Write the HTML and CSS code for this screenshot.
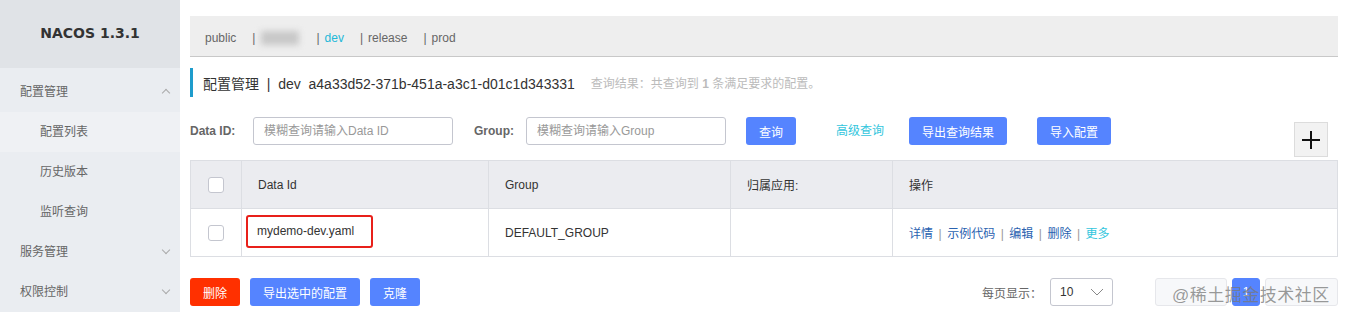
FILE: index.html
```html
<!DOCTYPE html>
<html lang="zh-CN">
<head>
    <meta charset="UTF-8">
    <title>Nacos - 配置列表</title>
    <link rel="stylesheet" href="styles.css">
</head>
<body>
    <div class="layout">
        <aside class="sidebar">
            <div class="brand">NACOS 1.3.1</div>
            <ul class="menu">
                <li class="menu-group">配置管理 <span class="arrow up"></span></li>
                <li class="menu-item active">配置列表</li>
                <li class="menu-item">历史版本</li>
                <li class="menu-item">监听查询</li>
                <li class="menu-group">服务管理 <span class="arrow"></span></li>
                <li class="menu-group">权限控制 <span class="arrow"></span></li>
            </ul>
        </aside>

        <main class="content">
            <div class="ns-bar">
                <span class="ns">public</span>
                <span class="ns"><span class="sep">|</span><span class="blurred"></span></span>
                <span class="ns current"><span class="sep">|</span>dev</span>
                <span class="ns"><span class="sep">|</span>release</span>
                <span class="ns"><span class="sep">|</span>prod</span>
            </div>

            <div class="page-title">
                <span class="title-main">配置管理 &nbsp;|&nbsp; dev &nbsp;a4a33d52-371b-451a-a3c1-d01c1d343331</span>
                <span class="title-info">查询结果：共查询到 <b>1</b> 条满足要求的配置。</span>
            </div>

            <div class="search-row">
                <label class="field-label">Data ID:</label>
                <input class="field-input" placeholder="模糊查询请输入Data ID">
                <label class="field-label group-label">Group:</label>
                <input class="field-input" placeholder="模糊查询请输入Group">
                <button class="btn btn-query">查询</button>
                <a class="link-adv">高级查询</a>
                <button class="btn btn-export">导出查询结果</button>
                <button class="btn btn-import">导入配置</button>
                <button class="btn-add">
                    <svg width="20" height="20" viewBox="0 0 20 20"><path d="M10 1v18M1 10h18" stroke="#111" stroke-width="2"/></svg>
                </button>
            </div>

            <table class="cfg-table">
                <thead>
                    <tr>
                        <th class="col-check"><span class="checkbox"></span></th>
                        <th class="col-id">Data Id</th>
                        <th class="col-group">Group</th>
                        <th class="col-app">归属应用:</th>
                        <th>操作</th>
                    </tr>
                </thead>
                <tbody>
                    <tr>
                        <td class="col-check"><span class="checkbox"></span></td>
                        <td class="col-id"><span class="highlight">mydemo-dev.yaml</span></td>
                        <td>DEFAULT_GROUP</td>
                        <td></td>
                        <td class="ops">
                            <a>详情</a><span class="op-sep">|</span><a>示例代码</a><span class="op-sep">|</span><a>编辑</a><span class="op-sep">|</span><a>删除</a><span class="op-sep">|</span><a class="more">更多</a>
                        </td>
                    </tr>
                </tbody>
            </table>

            <div class="footer-row">
                <button class="btn btn-delete">删除</button>
                <button class="btn btn-export-sel">导出选中的配置</button>
                <button class="btn btn-clone">克隆</button>
                <div class="pager">
                    <span class="page-size-label">每页显示：</span>
                    <div class="page-size">10
                        <svg width="14" height="8" viewBox="0 0 14 8"><path d="M1 1l6 6 6-6" fill="none" stroke="#888" stroke-width="1"/></svg>
                    </div>
                    <div class="pages">
                        <span class="page-btn prev"></span>
                        <span class="page-btn num">1</span>
                        <span class="page-btn next"></span>
                        <span class="watermark">@稀土掘金技术社区</span>
                    </div>
                </div>
            </div>
        </main>
    </div>
</body>
</html>
```

FILE: styles.css
```css
body {
    margin: 0;
    padding: 0;
    font-family: "Liberation Sans", "Noto Sans CJK SC", sans-serif;
    font-size: 12px;
    color: #333;
    overflow: hidden;
    height: 312px;
}

.layout {
    display: flex;
    height: 312px;
}

/* menu de gauche */
.sidebar {
    width: 180px;
    flex-shrink: 0;
    background-color: #eaedf1;
}

.brand {
    height: 68px;
    line-height: 67px;
    text-align: center;
    background-color: #e0e3e7;
    font-family: "DejaVu Sans", sans-serif;
    font-weight: bold;
    font-size: 14px;
    color: #333;
}

.menu {
    list-style: none;
    margin: 4px 0 0;
    padding: 0;
}

.menu li {
    height: 40px;
    line-height: 40px;
    color: #666;
    position: relative;
}

.menu-group {
    padding-left: 20px;
}

.menu-item {
    padding-left: 40px;
}

.menu-item.active {
    background-color: #eff1f4;
}

.arrow {
    position: absolute;
    right: 11px;
    top: 15px;
    width: 5px;
    height: 5px;
    border-right: 1px solid #aaa;
    border-bottom: 1px solid #aaa;
    transform: rotate(45deg);
}

.arrow.up {
    top: 18px;
    transform: rotate(-135deg);
}

/* contenu */
.content {
    flex: 1;
    padding: 16px 7px 0 10px;
    min-width: 0;
}

.ns-bar {
    height: 41px;
    box-sizing: border-box;
    padding-top: 4px;
    padding-left: 15px;
    background-color: #eeeeee;
    border-bottom: 1px solid #c8c8c8;
    display: flex;
    align-items: center;
    color: #666;
}

.ns {
    margin-right: 16px;
    display: flex;
    align-items: center;
}

.ns .sep {
    margin-right: 5px;
    color: #666;
}

.ns.current {
    color: #22b8d8;
}

.blurred {
    display: inline-block;
    width: 38px;
    height: 14px;
    background-color: #c8c8c8;
    filter: blur(3px);
    margin-left: 1px;
    margin-right: 1px;
}

.page-title {
    margin-top: 11px;
    height: 29px;
    border-left: 3px solid #1e9ccc;
    padding-left: 10px;
    display: flex;
    align-items: center;
}

.title-main {
    font-size: 14px;
    color: #333;
}

.title-info {
    margin-left: 16px;
    color: #bbb;
}

.title-info b {
    font-weight: bold;
}

.search-row {
    margin-top: 20px;
    height: 40px;
    display: flex;
    align-items: flex-start;
}

.field-label {
    font-weight: bold;
    color: #666;
    height: 28px;
    line-height: 28px;
    width: 63px;
    flex-shrink: 0;
}

.group-label {
    margin-left: 21px;
    width: 52px;
}

.field-input {
    width: 200px;
    height: 28px;
    box-sizing: border-box;
    border: 1px solid #c4c6cf;
    border-radius: 3px;
    padding: 0 10px;
    font-family: inherit;
    font-size: 12px;
    outline: none;
}

.field-input::placeholder {
    color: #999;
}

.btn {
    height: 28px;
    border: none;
    border-radius: 3px;
    background-color: #5584ff;
    color: #fff;
    font-family: inherit;
    font-size: 12px;
    padding: 0 12px;
    cursor: pointer;
}

.btn-query {
    width: 50px;
    padding: 0;
    margin-left: 20px;
}

.link-adv {
    height: 28px;
    line-height: 28px;
    margin-left: 40px;
    color: #33c6dd;
}

.btn-export {
    width: 98px;
    margin-left: 25px;
}

.btn-import {
    width: 74px;
    margin-left: 30px;
}

.btn-add {
    margin-left: auto;
    margin-right: 10px;
    margin-top: 5px;
    width: 34px;
    height: 35px;
    background-color: #f2f2f2;
    border: 1px solid #dcdcdc;
    padding: 0;
    display: flex;
    align-items: center;
    justify-content: center;
}

.cfg-table {
    width: 100%;
    margin-top: 3px;
    border-collapse: collapse;
    table-layout: fixed;
}

.cfg-table th,
.cfg-table td {
    height: 47px;
    border: 1px solid #dcdee3;
    text-align: left;
    padding: 0 16px;
    font-weight: normal;
    color: #333;
}

.cfg-table th {
    background-color: #ebecf0;
}

.cfg-table td {
    background-color: #fff;
}

.cfg-table .col-check {
    width: 50px;
    padding: 0;
    text-align: center;
}

.col-id {
    width: 214px;
}

.col-group {
    width: 209px;
}

.col-app {
    width: 129px;
}

.checkbox {
    display: inline-block;
    width: 14px;
    height: 14px;
    border: 1px solid #c4c6cf;
    border-radius: 3px;
    background-color: #fff;
    vertical-align: middle;
}

.cfg-table td.col-id {
    padding-left: 4px;
}

.highlight {
    display: inline-block;
    border: 2px solid #e8201a;
    border-radius: 3px;
    padding: 0 9px;
    height: 29px;
    line-height: 29px;
    width: 105px;
    margin-top: -3px;
}

.ops a {
    color: #2a62b0;
}

.ops a.more {
    color: #33c6dd;
}

.op-sep {
    color: #999;
    margin: 0 5.5px;
}

.footer-row {
    margin-top: 21px;
    display: flex;
    align-items: center;
}

.btn-delete {
    width: 50px;
    padding: 0;
    background-color: #ff3000;
}

.btn-export-sel {
    width: 110px;
    margin-left: 10px;
    padding: 0;
}

.btn-clone {
    width: 50px;
    margin-left: 10px;
    padding: 0;
}

.pager {
    margin-left: auto;
    display: flex;
    align-items: center;
}

.page-size-label {
    color: #666;
    margin-right: 8px;
}

.page-size {
    width: 63px;
    height: 28px;
    box-sizing: border-box;
    border: 1px solid #c4c6cf;
    border-radius: 3px;
    padding: 0 8px 0 9px;
    display: flex;
    align-items: center;
    justify-content: space-between;
}

.pages {
    margin-left: 42px;
    display: flex;
    align-items: center;
    position: relative;
}

.page-btn {
    height: 28px;
    box-sizing: border-box;
    border: 1px solid #e6e7eb;
    border-radius: 3px;
    background-color: #f7f8fa;
}

.prev {
    width: 72px;
}

.num {
    width: 28px;
    margin: 0 5px;
    background-color: #5584ff;
    border-color: #5584ff;
    color: #fff;
    text-align: center;
    line-height: 26px;
}

.next {
    width: 73px;
}

.watermark {
    position: absolute;
    left: 17px;
    top: 3px;
    font-size: 17px;
    color: rgba(120, 120, 120, 0.75);
    white-space: nowrap;
    letter-spacing: 0.5px;
}
```
